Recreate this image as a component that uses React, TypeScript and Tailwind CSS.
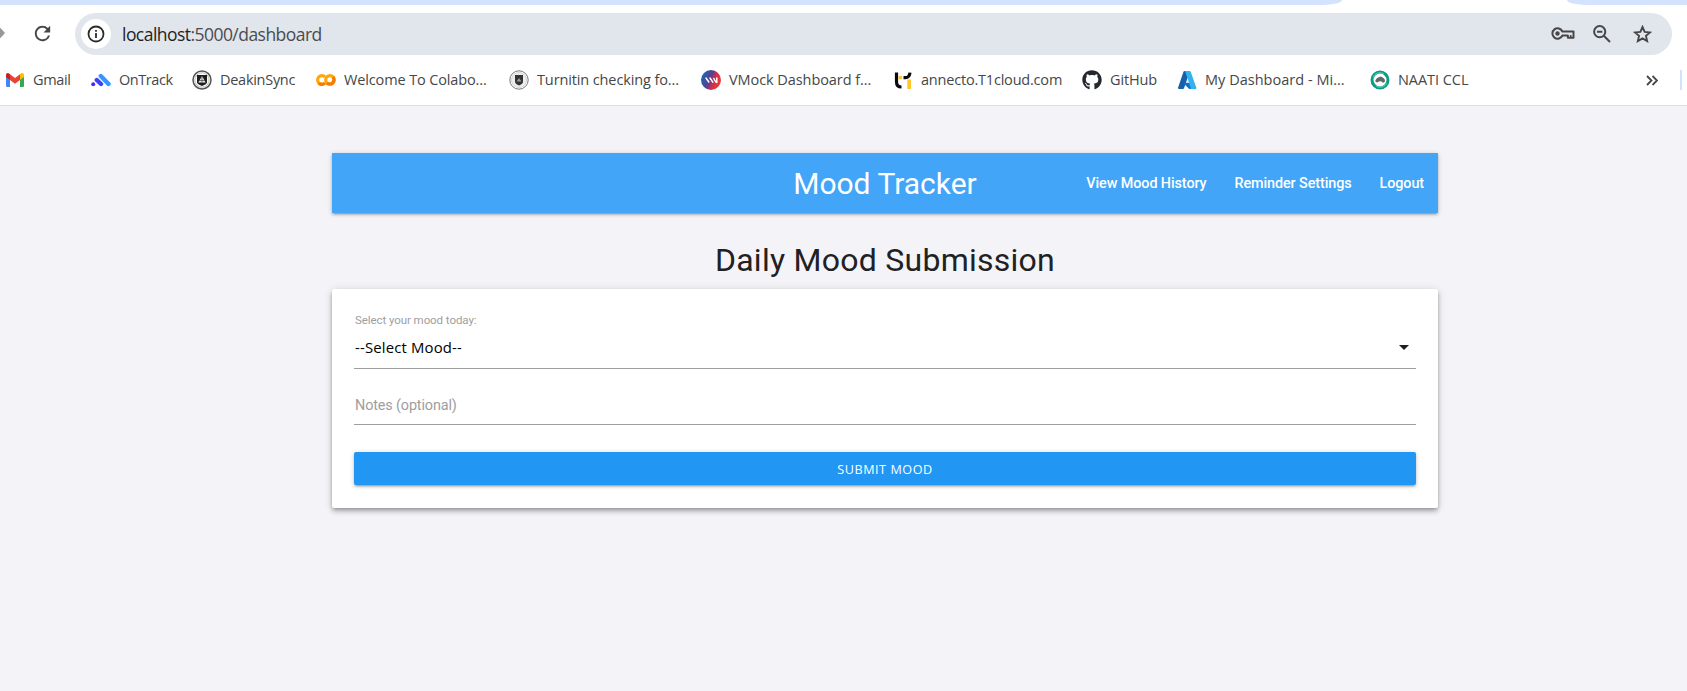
import React from "react";
import { MdRefresh } from "react-icons/md";
import { FaGithub } from "react-icons/fa";

const GmailIcon = () => (
  <svg width="18" height="14" viewBox="0 0 18 14">
    <path d="M0 2v10.700c0 .7.600 1.300 1.300 1.300H4V5.500z" fill="#4285f4" />
    <path d="M18 2v10.700c0 .7-.600 1.300-1.300 1.300H14V5.500z" fill="#34a853" />
    <path d="M4 1.200 9 5l5-3.800V7L9 10.700 4 7z" fill="#ea4335" />
    <path d="M0 2C0 .2 2-.6 3.400.700L4 1.200V7L0 4z" fill="#c5221f" />
    <path d="M18 2c0-1.800-2-2.600-3.400-1.300L14 1.200V7l4-3z" fill="#fbbc04" />
  </svg>
);

const OnTrackIcon = () => (
  <svg width="20" height="14" viewBox="0 0 20 14" fill="none" strokeLinecap="round">
    <path d="M9.800 3 17.500 11" stroke="#3397ff" strokeWidth="4.400" />
    <path d="M5.800 7 10 11" stroke="#4040f5" strokeWidth="4.400" />
    <path d="M2.200 11.300v0" stroke="#4a28f0" strokeWidth="4" />
  </svg>
);

const DeakinIcon = () => (
  <svg width="20" height="20" viewBox="0 0 20 20">
    <circle cx="10" cy="10" r="9" fill="#fff" stroke="#555" strokeWidth="1.500" />
    <circle cx="10" cy="10" r="7.200" fill="none" stroke="#bbb" strokeWidth="1" />
    <path d="M5 5h10v7.500c0 1.500-3 2.500-5 3.500-2-1-5-2-5-3.500z" fill="#1d1d1f" />
    <path d="m10 6 3.700 6.500H6.300z" fill="#e8e8e8" />
    <path d="M7 10.500h6M10 6v6" stroke="#444" strokeWidth=".7" />
  </svg>
);

const ColabIcon = () => (
  <svg width="20" height="12" viewBox="0 0 20 12" fill="none" strokeWidth="3.200">
    <path d="M9 3A4.300 4.300 0 1 0 9 9" stroke="#ffa60a" />
    <path d="M2.800 9.200A4.300 4.300 0 0 0 9 9" stroke="#f57c00" />
    <circle cx="14" cy="6" r="4.300" stroke="#ffa60a" />
    <path d="M10.900 9A4.300 4.300 0 0 0 17 3" stroke="#f57c00" />
  </svg>
);

const TurnitinIcon = () => (
  <svg width="20" height="20" viewBox="0 0 20 20">
    <circle cx="10" cy="10" r="9.200" fill="#fff" stroke="#777" strokeWidth="1" />
    <circle cx="10" cy="10" r="7.500" fill="#eee" stroke="#ccc" strokeWidth=".8" />
    <path d="M6 5h8v7c0 1.500-2 2.500-4 3.500-2-1-4-2-4-3.500z" fill="#333" />
    <path d="M7.500 11.500 10 8l2.500 3.500z" fill="#999" />
  </svg>
);

const VMockIcon = () => (
  <svg width="20" height="20" viewBox="0 0 20 20">
    <defs>
      <linearGradient id="vmock" x1="0" x2="1" y1=".3" y2=".7">
        <stop offset="0" stopColor="#1769b5" />
        <stop offset=".45" stopColor="#5c3f91" />
        <stop offset=".65" stopColor="#d32f48" />
        <stop offset="1" stopColor="#ef3e36" />
      </linearGradient>
    </defs>
    <circle cx="10" cy="10" r="10" fill="url(#vmock)" />
    <path d="m5 8 2.800 4M9 8l2.800 4.200M12.800 8.500l2 3.500M15.800 8v4.500" stroke="#fff" strokeWidth="1.500" strokeLinecap="round" />
  </svg>
);

const T1Icon = () => (
  <svg width="18" height="17" viewBox="0 0 18 17">
    <path d="M2.500.500v9.500c0 3.500 1.500 5 5 5" fill="none" stroke="#0a0a0a" strokeWidth="3.200" />
    <path d="M4.500 4H8v3.200H4.500zM13.300 7.500H17V17h-3.700z" fill="#ffc62b" />
    <path d="M9.500 5.600h2c2 0 4-1.400 4.500-5" fill="none" stroke="#0a0a0a" strokeWidth="3.200" />
  </svg>
);

const AzureIcon = () => (
  <svg width="19" height="18" viewBox="0 0 19 18">
    <path d="M6.500 0H12L6 17.300c-.2.400-.5.700-1 .700H1c-.700 0-1.200-.7-1-1.300L5.500.7C5.700.3 6 0 6.500 0z" fill="#1560ab" />
    <path d="M14.500 11.800H6.200c-.5 0-.7.600-.3.900L11.200 18H17z" fill="#0a73d0" />
    <path d="M12.700.7C12.500.3 12.200 0 11.700 0H6.300c.5 0 .9.300 1 .7L12.700 16.700c.2.600-.3 1.300-1 1.300h5.700c.7 0 1.200-.7 1-1.300z" fill="#35b2ee" />
  </svg>
);

const NaatiIcon = () => (
  <svg width="20" height="20" viewBox="0 0 20 20">
    <circle cx="10" cy="10" r="8" fill="#fff" stroke="#0c9c84" strokeWidth="3" />
    <path d="M3 7c2-4 7-5.500 11-3M17 13c-2 4-7 5.500-11 3" fill="none" stroke="#7fd0c2" strokeWidth=".8" />
    <path d="M5.300 11.500c0-2 1.200-2.700 2.200-3.700l2-.8 1.200-.6L13 7.800c1.500 1 2.500 2.500 1.700 4.200l-1.700.8-2-1.500-2 .2-2 1z" fill="#666" />
  </svg>
);

const KeyIcon = () => (
  <svg width="24" height="16" viewBox="0 0 24 16" fill="none" stroke="#474747" strokeWidth="2">
    <path d="M11.400 5.500H22.500v6.300h-5.600V9.500h-5.500A5.200 5.200 0 1 1 11.400 5.500z" strokeLinejoin="round" />
    <path d="M19.700 9v2.500" strokeWidth="1.600" />
    <circle cx="6.500" cy="7.500" r="2.200" fill="#474747" stroke="none" />
  </svg>
);

const ZoomOutIcon = () => (
  <svg width="18" height="18" viewBox="0 0 18 18" fill="none" stroke="#474747" strokeWidth="2">
    <circle cx="6.700" cy="6.700" r="5.600" />
    <path d="M4 6.700h5.400M10.800 10.800l6.200 6.200" />
  </svg>
);

const StarIcon = () => (
  <svg width="19" height="18" viewBox="0 0 19 18" fill="none" stroke="#474747" strokeWidth="1.900">
    <path d="M9.500 2l2.150 4.900 5.350.5-4.050 3.500 1.200 5.200-4.650-2.750-4.650 2.750 1.200-5.200L2 7.400l5.350-.5z" />
  </svg>
);

const bookmarks = [
  { label: "Gmail", icon: <GmailIcon />, box: "w-[86px]", text: "tracking-[-0.35px]" },
  { label: "OnTrack", icon: <OnTrackIcon />, box: "w-[101px]", text: "tracking-[-0.43px]" },
  { label: "DeakinSync", icon: <DeakinIcon />, box: "w-[124px]", text: "tracking-[-0.28px]" },
  { label: "Welcome To Colabo...", icon: <ColabIcon />, box: "w-[193px]", text: "tracking-[-0.13px]" },
  { label: "Turnitin checking fo...", icon: <TurnitinIcon />, box: "w-[192px]", text: "tracking-[-0.12px]" },
  { label: "VMock Dashboard f...", icon: <VMockIcon />, box: "w-[192px]", text: "tracking-[-0.07px]" },
  { label: "annecto.T1cloud.com", icon: <T1Icon />, box: "w-[189px]", text: "tracking-[-0.2px]" },
  { label: "GitHub", icon: <FaGithub size={20} color="#24292f" />, box: "w-[95px]", text: "tracking-[-0.15px]" },
  { label: "My Dashboard - Mi...", icon: <AzureIcon />, box: "w-[193px]", text: "tracking-[0.02px]" },
  { label: "NAATI CCL", icon: <NaatiIcon />, box: "w-[120px]", text: "tracking-[-0.05px]" },
];

function BrowserChrome() {
  return (
    <header className="flex h-[106px] flex-col border-b border-[#dedee2] bg-white">
      <div className="flex h-[5px] justify-between">
        <div className="w-[1342px] rounded-br-[20px_5px] bg-[#d3e3fd]" />
        <div className="w-[120px] rounded-bl-[20px_5px] bg-[#d3e3fd]" />
      </div>
      <div className="mt-2 flex h-[42px] items-center">
        <svg width="6" height="12" viewBox="0 0 6 12" className="-mt-0.5">
          <path d="M0 1.500 4 6 0 10.500" fill="#999" stroke="#999" strokeWidth="1.500" />
        </svg>
        <MdRefresh size={23} color="#474747" className="-mt-0.5 ml-[25px]" />
        <div className="ml-[21px] flex h-full w-[1597px] items-center rounded-full bg-[#e1e5ec] pl-1.5 pr-5">
          <div className="flex size-[30px] items-center justify-center rounded-full bg-white">
            <svg width="18" height="18" viewBox="0 0 18 18" fill="none" stroke="#2b2b2b" strokeWidth="1.800">
              <circle cx="9" cy="9" r="7.500" />
              <path d="M9 8v5M9 5v1.800" />
            </svg>
          </div>
          <span className="ml-[11px] grow font-['Open_Sans',sans-serif] text-[17.500px] tracking-[-0.54px] text-[#4a4c50]">
            <span className="text-[#1f1f1f]">localhost</span>:5000/dashboard
          </span>
          <KeyIcon />
          <span className="ml-[18px]">
            <ZoomOutIcon />
          </span>
          <span className="ml-[22px]">
            <StarIcon />
          </span>
        </div>
      </div>
      <nav className="flex h-[50px] items-center pl-[5px] font-['Open_Sans',sans-serif] text-[14.500px] text-[#454749]">
        {bookmarks.map((b) => (
          <a key={b.label} className={`flex shrink-0 items-center gap-2 whitespace-nowrap ${b.box}`}>
            <span className="flex w-5 justify-center">{b.icon}</span>
            <span className={b.text}>{b.label}</span>
          </a>
        ))}
        <svg width="12" height="11" viewBox="0 0 12 11" fill="none" stroke="#474747" strokeWidth="1.800" className="ml-[156px]">
          <path d="M1 1l4.500 4.500L1 10M6.500 1 11 5.500 6.500 10" />
        </svg>
        <div className="ml-[22px] h-5 w-0.5 bg-[#d3e3fd]" />
      </nav>
    </header>
  );
}

export default function App() {
  return (
    <div className="h-[691px] overflow-hidden bg-[#f4f3f8] font-[Roboto,sans-serif]">
      <BrowserChrome />
      <main className="ml-[332px] mt-[47px] w-[1106px]">
        <nav className="grid h-[60px] grid-cols-[1fr_auto_1fr] items-center bg-[#42a5f7] text-white shadow-[0_2px_2px_0_rgba(0,0,0,0.14),0_3px_1px_-2px_rgba(0,0,0,0.12),0_1px_5px_0_rgba(0,0,0,0.2)]">
          <span className="col-start-2 text-[30px]">Mood Tracker</span>
          <div className="flex justify-end gap-7 pr-[14px] pt-0.5 text-[14.400px] font-medium tracking-[-0.1px]">
            <a>View Mood History</a>
            <a>Reminder Settings</a>
            <a>Logout</a>
          </div>
        </nav>
        <h1 className="mt-[26px] h-[50px] text-center text-[32px] leading-[42px] tracking-[0.26px] text-[#212121]">
          Daily Mood Submission
        </h1>
        <form className="flex h-[219px] flex-col rounded-[2px] bg-white px-[22px] shadow-[0_4px_5px_0_rgba(0,0,0,0.14),0_1px_10px_0_rgba(0,0,0,0.12),0_2px_4px_-1px_rgba(0,0,0,0.3)]">
          <label className="mt-[23px] h-4 pl-px text-[11.500px] leading-4 tracking-[-0.07px] text-[#9e9e9e]">Select your mood today:</label>
          <div className="flex h-[41px] items-center justify-between border-b border-[#9e9e9e] pb-0.5 pl-px pr-[7px] font-['Open_Sans',sans-serif] text-[14.900px] text-black">
            <span className="tracking-[0.16px]">--Select Mood--</span>
            <svg width="10" height="5" viewBox="0 0 10 5">
              <path d="M0 0h10L5 5z" fill="#1f1f1f" />
            </svg>
          </div>
          <div className="flex h-14 items-end border-b border-[#9e9e9e] pb-[7px] pl-px text-[14.400px] tracking-[-0.13px] text-[#9e9e9e]">Notes (optional)</div>
          <button
            type="button"
            className="mt-[27px] h-[33px] rounded-[2px] bg-[#2196f3] pt-[3px] font-['Open_Sans',sans-serif] text-[12.600px] tracking-[0.55px] text-white shadow-[0_2px_2px_0_rgba(0,0,0,0.14),0_3px_1px_-2px_rgba(0,0,0,0.12),0_1px_5px_0_rgba(0,0,0,0.2)]"
          >
            SUBMIT MOOD
          </button>
        </form>
      </main>
    </div>
  );
}
